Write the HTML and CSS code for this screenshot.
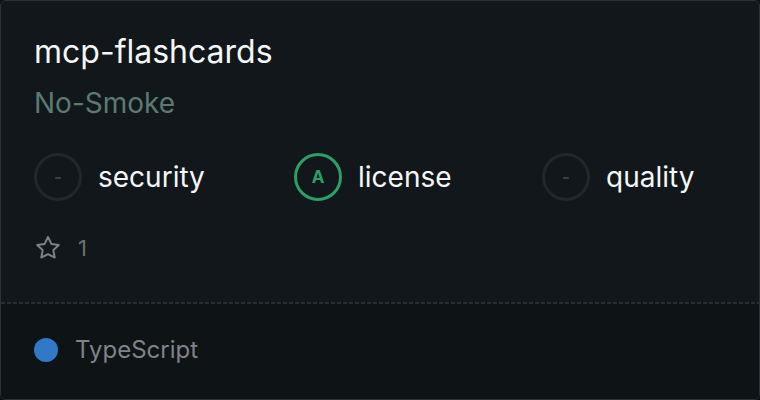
FILE: index.html
```html
<!DOCTYPE html>
<html lang="en">
<head>
  <meta charset="UTF-8">
  <title>mcp-flashcards</title>
  <link rel="stylesheet" href="styles.css">
</head>
<body>
  <div class="card">
    <div class="card-body">
      <h1 class="repo-name">mcp-flashcards</h1>
      <p class="owner">No-Smoke</p>

      <div class="scores">
        <div class="score">
          <span class="grade grade-none">-</span>
          <span class="score-label">security</span>
        </div>
        <div class="score">
          <span class="grade grade-a">A</span>
          <span class="score-label">license</span>
        </div>
        <div class="score">
          <span class="grade grade-none">-</span>
          <span class="score-label">quality</span>
        </div>
      </div>

      <div class="stars">
        <svg class="star-icon" width="28" height="28" viewBox="0 0 24 24" fill="none" stroke="currentColor" stroke-width="1.7" stroke-linejoin="round">
          <path d="M12 2.6l2.85 5.9 6.4.85-4.7 4.45 1.2 6.4L12 17.15l-5.75 3.050 1.2-6.4-4.7-4.45 6.4-.85z"/>
        </svg>
        <span class="star-count">1</span>
      </div>
    </div>

    <div class="divider"></div>

    <div class="card-footer">
      <span class="lang-dot"></span>
      <span class="lang-name">TypeScript</span>
    </div>
  </div>
</body>
</html>
```

FILE: styles.css
```css
/* page */
body {
  margin: 0;
  padding: 0;
  background-color: #0d1114;
  font-family: Inter, 'Noto Sans', sans-serif;
}

.card {
  box-sizing: border-box;
  width: 760px;
  height: 400px;
  border: 1px solid #2b3135;
  border-radius: 6px;
  background-color: #11171a;
  overflow: hidden;
  display: flex;
  flex-direction: column;
}

.card-body {
  box-sizing: border-box;
  height: 301px;
  padding: 31px 33px 0;
}

.repo-name {
  margin: 0;
  font-size: 32px;
  font-weight: 400;
  line-height: 40px;
  color: #f4f6f7;
}

.owner {
  margin: 13px 0 0;
  font-size: 28px;
  line-height: 36px;
  color: #5c7a72;
}

/* score badges */
.scores {
  display: grid;
  grid-template-columns: 260px 248px auto;
  margin-top: 32px;
}

.score {
  display: flex;
  align-items: center;
  gap: 16px;
}

.grade {
  box-sizing: border-box;
  width: 48px;
  height: 48px;
  border-radius: 50%;
  border: 3px solid #21272b;
  display: flex;
  align-items: center;
  justify-content: center;
  font-size: 17px;
  font-weight: 700;
}

.grade-none {
  color: #3b4246;
}

.grade-a {
  border-color: #2f9e66;
  color: #2f9e66;
}

.score-label {
  font-size: 28px;
  line-height: 36px;
  color: #f4f6f7;
}

/* stars */
.stars {
  display: flex;
  align-items: center;
  gap: 16px;
  height: 30px;
  margin-top: 32px;
}

.star-icon {
  color: #7d8287;
}

.star-count {
  font-size: 22px;
  color: #6c7176;
}

.divider {
  height: 2px;
  background-image: repeating-linear-gradient(90deg, #272d31 0 4px, transparent 4px 6px);
}

/* footer */
.card-footer {
  flex: 1;
  display: flex;
  align-items: center;
  gap: 17px;
  padding: 0 33px 4px;
  background-color: #0e1316;
}

.lang-dot {
  width: 24px;
  height: 24px;
  border-radius: 50%;
  background-color: #3178c6;
}

.lang-name {
  font-size: 24px;
  color: #7e8388;
}
```
